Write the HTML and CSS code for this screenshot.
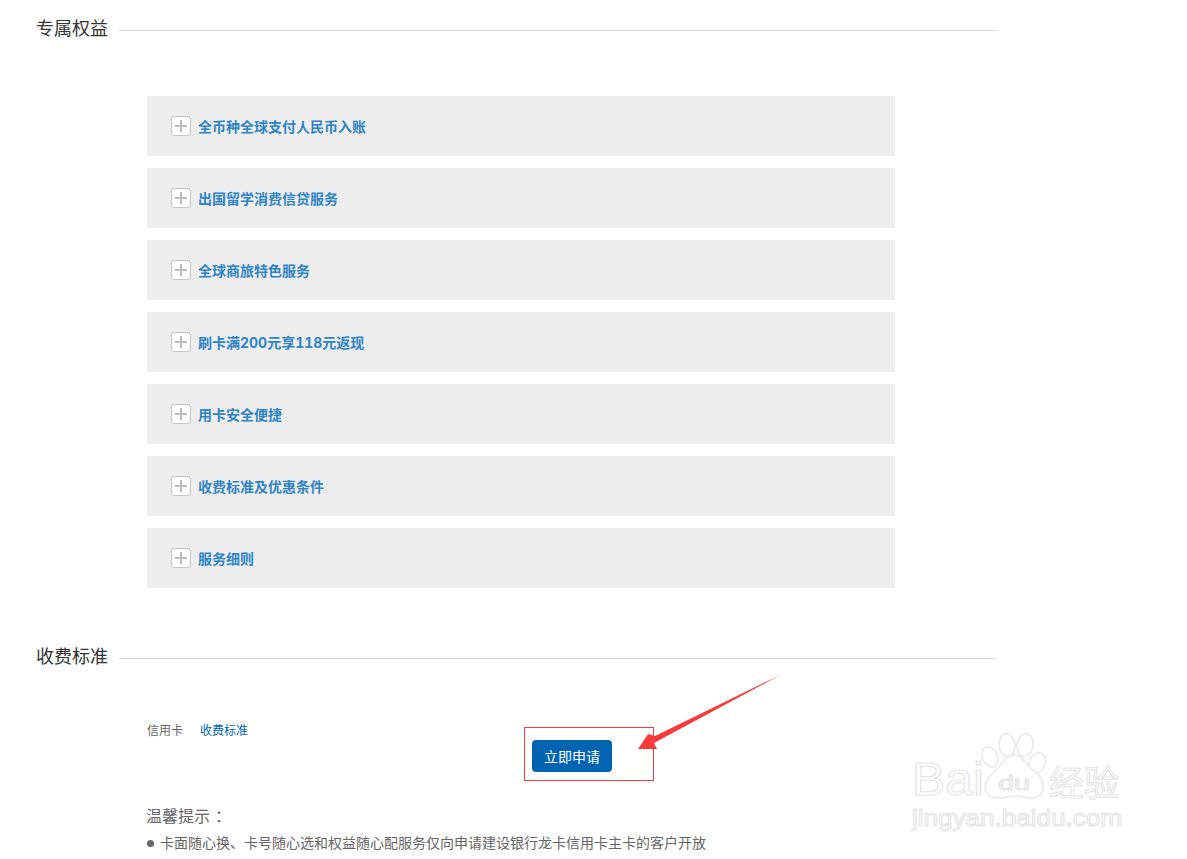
FILE: index.html
```html
<!DOCTYPE html>
<html lang="zh-CN">
<head>
<meta charset="utf-8">
<title>专属权益</title>
<link rel="stylesheet" href="styles.css">
</head>
<body>
<main class="page">
  <section class="section section-benefits">
    <h2 class="section-title"><span>专属权益</span></h2>
    <ul class="accordion">
      <li class="accordion-item"><span class="plus"></span><span class="accordion-label">全币种全球支付人民币入账</span></li>
      <li class="accordion-item"><span class="plus"></span><span class="accordion-label">出国留学消费信贷服务</span></li>
      <li class="accordion-item"><span class="plus"></span><span class="accordion-label">全球商旅特色服务</span></li>
      <li class="accordion-item"><span class="plus"></span><span class="accordion-label">刷卡满200元享118元返现</span></li>
      <li class="accordion-item"><span class="plus"></span><span class="accordion-label">用卡安全便捷</span></li>
      <li class="accordion-item"><span class="plus"></span><span class="accordion-label">收费标准及优惠条件</span></li>
      <li class="accordion-item"><span class="plus"></span><span class="accordion-label">服务细则</span></li>
    </ul>
  </section>
  <section class="section section-fees">
    <h2 class="section-title"><span>收费标准</span></h2>
    <div class="fees-body">
      <div class="fee-links"><span class="fee-name">信用卡</span><a class="fee-link">收费标准</a></div>
      <div class="apply-row"><a class="apply-btn">立即申请</a></div>
      <p class="tip-title">温馨提示<span class="tip-colon">：</span></p>
      <p class="tip-line"><span class="dot"></span>卡面随心换、卡号随心选和权益随心配服务仅向申请建设银行龙卡信用卡主卡的客户开放</p>
    </div>
  </section>
</main>

<div class="mark-box"></div>
<svg class="mark-arrow" width="160" height="90" viewBox="0 0 160 90">
  <defs>
    <linearGradient id="arrowFade" x1="151" y1="2" x2="3" y2="79" gradientUnits="userSpaceOnUse">
      <stop offset="0" stop-color="#fb3a3c" stop-opacity="0.25"/>
      <stop offset="0.15" stop-color="#fb3a3c"/>
      <stop offset="1" stop-color="#fb3a3c"/>
    </linearGradient>
  </defs>
  <polygon points="151,2 20,66 13,64 3,79 22,79 19,73" fill="url(#arrowFade)"/>
</svg>

<svg class="watermark" width="220" height="115" viewBox="0 0 220 115">
  <g class="paw">
    <ellipse cx="79" cy="32" rx="7.5" ry="10.5" transform="rotate(-25 79 32)"/>
    <ellipse cx="96" cy="20" rx="8" ry="11.5" transform="rotate(-5 96 20)"/>
    <ellipse cx="114" cy="20" rx="8" ry="11.5" transform="rotate(8 114 20)"/>
    <ellipse cx="126" cy="38" rx="8" ry="10.5" transform="rotate(25 126 38)"/>
    <path d="M103 30c9 0 11 9 19 15 7 5 10 11 10 17 0 8-6 12-14 11-6-1-10-2-15-2-6 0-10 2-16 2-8 0-13-4-13-11 0-7 5-12 11-17 8-6 9-15 18-15z"/>
  </g>
  <g class="mark-text">
    <text x="1" y="70" font-size="46" textLength="72" lengthAdjust="spacingAndGlyphs">Bai</text>
    <text x="87" y="65" font-size="20" textLength="32" lengthAdjust="spacingAndGlyphs">du</text>
    <text x="138" y="71" class="mark-cjk" font-size="35">经验</text>
    <text x="1" y="101" font-size="24" textLength="210" lengthAdjust="spacingAndGlyphs">jingyan.baidu.com</text>
  </g>
</svg>
</body>
</html>
```
FILE: styles.css
```css
* { box-sizing: border-box; }
html, body { margin: 0; padding: 0; background: #fff; }
body {
  height: 859px;
  overflow: hidden;
  position: relative;
  font-family: "Liberation Sans", "Noto Sans CJK SC", sans-serif;
  color: #666;
}
.page {
  width: 960px;
  margin-left: 37px;
}
.section-title {
  display: flex;
  align-items: center;
  gap: 11px;
  margin: 0 0 0 -1px;
  height: 26px;
  font-size: 18px;
  font-weight: 400;
  line-height: 26px;
  color: #333;
}
.section-title::after {
  content: "";
  flex: 1;
  height: 1px;
  margin-top: 2px;
  background: #ddd;
}
.section-benefits { padding-top: 16px; }
.accordion {
  list-style: none;
  margin: 54px 0 0 110px;
  padding: 0;
  width: 748px;
  display: flex;
  flex-direction: column;
  gap: 12px;
}
.accordion-item {
  display: flex;
  align-items: center;
  gap: 7px;
  height: 60px;
  padding-left: 24px;
  background: #eee;
}
.plus {
  position: relative;
  flex: none;
  width: 20px;
  height: 20px;
  background: #fff;
  border: 1px solid #c4c4c4;
  border-radius: 3px;
}
.plus::before, .plus::after {
  content: "";
  position: absolute;
  background: #bdbdbd;
}
.plus::before { left: 3px; right: 3px; top: 8px; height: 2px; }
.plus::after { top: 3px; bottom: 3px; left: 8px; width: 2px; }
.accordion-label {
  font-family: Inter, "Noto Sans CJK SC", sans-serif;
  font-size: 14px;
  font-weight: 700;
  font-variant-numeric: tabular-nums;
  color: #2e84c6;
}
.section-fees { padding-top: 56px; }
.fees-body {
  margin-left: 110px;
  width: 850px;
}
.fee-links {
  display: flex;
  gap: 17px;
  margin-top: 52px;
  height: 18px;
  font-size: 12px;
  line-height: 18px;
}
.fee-name { color: #666; }
.fee-link { color: #0066b3; }
.apply-row {
  display: flex;
  justify-content: center;
}
.apply-btn {
  width: 80px;
  height: 32px;
  border-radius: 4px;
  background: #0064b2;
  color: #fff;
  font-size: 14px;
  line-height: 34px;
  text-align: center;
}
.tip-title {
  margin: 33px 0 0 -1px;
  font-size: 16px;
  line-height: 24px;
  color: #666;
}
.tip-colon {
  margin-left: 5px;
}
.tip-line {
  display: flex;
  align-items: center;
  margin: 3px 0 0;
  font-size: 14px;
  line-height: 22px;
  color: #666;
}
.dot {
  width: 7px;
  height: 7px;
  margin-right: 6px;
  border-radius: 50%;
  background: #666;
}
.mark-box {
  position: absolute;
  left: 524px;
  top: 727px;
  width: 130px;
  height: 54px;
  border: 1px solid #fb3a3c;
}
.mark-arrow {
  position: absolute;
  left: 635px;
  top: 670px;
}
.watermark {
  position: absolute;
  left: 911px;
  top: 725px;
}
.paw {
  fill: #fff;
  stroke: #e8e8e8;
  stroke-width: 1.5;
}
.mark-text text {
  font-family: "Liberation Sans", sans-serif;
  fill: #fff;
  stroke: #e6e6e6;
  stroke-width: 1.2;
}
.mark-text .mark-cjk {
  font-family: "Noto Sans CJK SC", sans-serif;
}
```
